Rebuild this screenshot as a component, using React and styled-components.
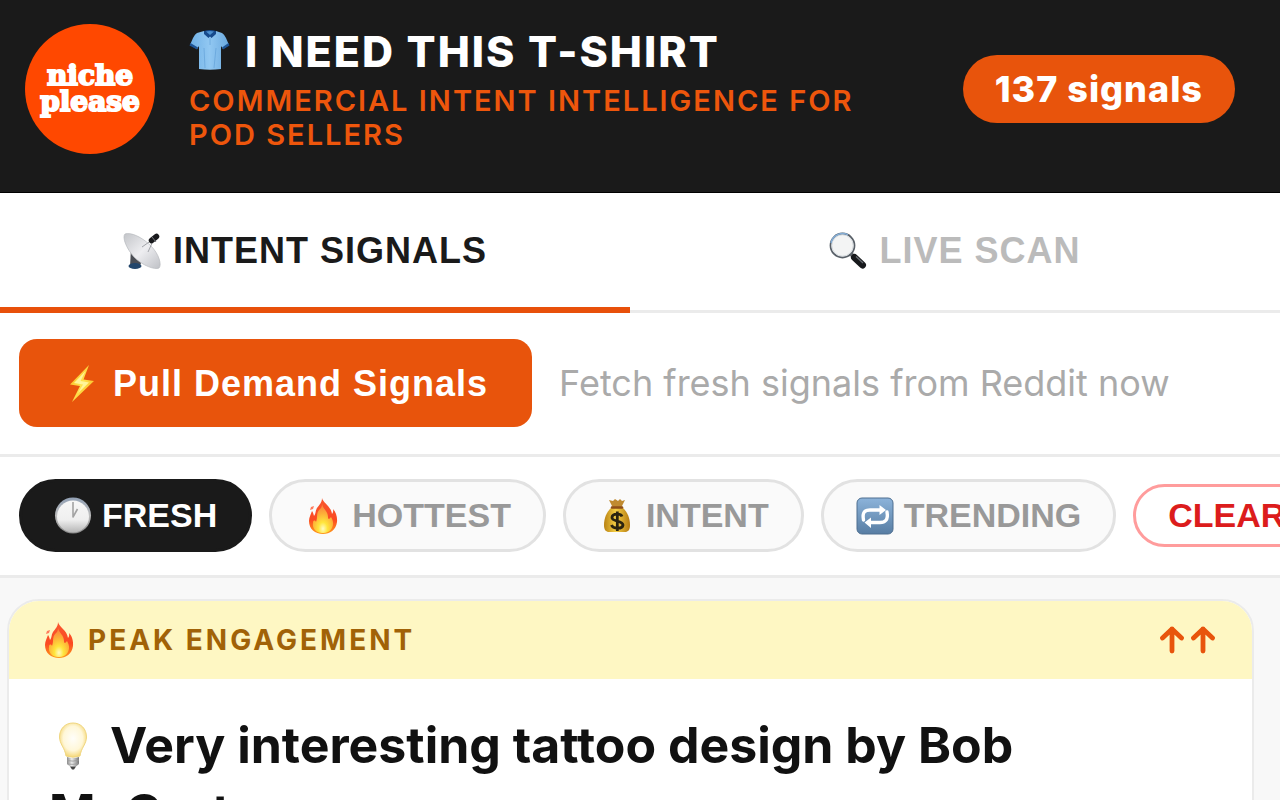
import React from "react";
import styled, { createGlobalStyle } from "styled-components";

const Global = createGlobalStyle`
  *, *::before, *::after { box-sizing: border-box; }
  html, body { margin: 0; min-height: 100vh; background: #f8f8f8; }
  body { overflow-x: hidden; font-family: Inter, "Liberation Sans", sans-serif; color: #111; }
  button { font-family: "Liberation Sans", Arial, sans-serif; cursor: pointer; }
  h1, h2, p { margin: 0; }
`;

const Page = styled.div`
  overflow: hidden;
  height: 100vh;
`;

/* ---------- header ---------- */

const Header = styled.header`
  display: flex;
  align-items: center;
  gap: 34px;
  padding: 24px 45px 38px 25px;
  background: #1a1a1a;
  border-bottom: 1px solid #000;
`;

const Logo = styled.div`
  flex: none;
  width: 130px;
  height: 130px;
  border-radius: 50%;
  background: #ff4800;
  display: flex;
  align-items: center;
  justify-content: center;
  text-align: center;
  color: #fff;
  font: 700 28px/26px "DejaVu Serif", serif;
  -webkit-text-stroke: 2px #fff;
`;

const Brand = styled.div`
  flex: 1;
  min-width: 0;
  padding-right: 16px;
  display: flex;
  flex-direction: column;
  gap: 8px;
`;

const Title = styled.h1`
  display: flex;
  align-items: center;
  gap: 14px;
  color: #fff;
  font-size: 43px;
  font-weight: 800;
  line-height: 50px;
  letter-spacing: 2px;
`;

const Tagline = styled.p`
  color: #ee560c;
  font-size: 29px;
  font-weight: 600;
  line-height: 34px;
  letter-spacing: 2px;
  text-transform: uppercase;
`;

const CountBadge = styled.span`
  flex: none;
  padding: 0 32px;
  border-radius: 34px;
  background: #e8540c;
  color: #fff;
  font-size: 36px;
  font-weight: 800;
  line-height: 68px;
  letter-spacing: 1px;
`;

/* ---------- tabs ---------- */

const Tabs = styled.nav`
  display: flex;
  margin-left: -20px;
  background: #fff;
`;

const Tab = styled.button`
  flex: 1;
  display: flex;
  align-items: center;
  justify-content: center;
  gap: 12px;
  height: 120px;
  padding: 0 0 5px;
  border: 0;
  background: #fff;
  box-shadow: inset 0 ${(p) => (p.$active ? "-6px 0 #e8500a" : "-3px 0 #ebebeb")};
  color: ${(p) => (p.$active ? "#1a1a1a" : "#bbb")};
  font-size: 36px;
  font-weight: 700;
  letter-spacing: 1px;
`;

/* ---------- action row and filters ---------- */

const ActionRow = styled.section`
  display: flex;
  align-items: center;
  gap: 27px;
  padding: 26px 19px 27px;
  background: #fff;
  border-bottom: 3px solid #ebebeb;
`;

const PullButton = styled.button`
  flex: none;
  display: flex;
  align-items: center;
  gap: 12px;
  height: 88px;
  padding: 2px 44px 0;
  border: 0;
  border-radius: 18px;
  background: #e8540c;
  color: #fff;
  font-size: 36px;
  font-weight: 700;
  letter-spacing: 1px;
`;

const Hint = styled.p`
  color: #aaa;
  font-size: 36px;
  line-height: 44px;
  white-space: nowrap;
`;

const Filters = styled.section`
  display: flex;
  align-items: center;
  gap: 17px;
  padding: 22px 19px 23px;
  background: #fff;
  border-bottom: 3px solid #ebebeb;
`;

const Chip = styled.button`
  flex: none;
  display: flex;
  align-items: center;
  gap: 10px;
  height: 73px;
  padding: 0 32px;
  border: 3px solid ${(p) => (p.$active ? "#1a1a1a" : "#e2e2e2")};
  border-radius: 37px;
  background: ${(p) => (p.$active ? "#1a1a1a" : "#fafafa")};
  color: ${(p) => (p.$active ? "#fff" : "#999")};
  font-size: 34px;
  font-weight: 700;
`;

const ClearChip = styled(Chip)`
  height: 63px;
  border-color: #ff9c9c;
  background: #fff;
  color: #dc1c1c;
`;

/* ---------- feed ---------- */

const Feed = styled.main`
  padding: 21px 26px 21px 7px;
`;

const Card = styled.article`
  overflow: hidden;
  border: 2px solid #ebebeb;
  border-radius: 32px;
  background: #fff;
`;

const CardBanner = styled.div`
  display: flex;
  align-items: center;
  justify-content: space-between;
  height: 78px;
  padding: 0 36px 0 31px;
  background: #fef7c3;
`;

const BannerLabel = styled.span`
  display: flex;
  align-items: center;
  gap: 10px;
  color: #a16207;
  font-size: 28px;
  font-weight: 700;
  letter-spacing: 3px;
`;

const CardTitle = styled.h2`
  padding: 33px 40px;
  font-size: 50px;
  font-weight: 700;
  line-height: 67px;
  color: #111;
`;

/* ---------- drawings ---------- */

const Icon = styled.svg`
  flex: none;
  display: block;
  width: ${(p) => p.$size || 38}px;
  height: ${(p) => p.$size || 38}px;
`;

const InlineIcon = styled(Icon)`
  display: inline-block;
  vertical-align: -7px;
  margin-right: 13px;
`;

const Shirt = () => (
  <Icon $size={42} viewBox="0 0 42 42" aria-hidden="true">
    <defs>
      <linearGradient id="shirt" x1="0" x2="1">
        <stop offset="0" stopColor="#6fb0e6" />
        <stop offset=".5" stopColor="#92c8f2" />
        <stop offset="1" stopColor="#6aa9df" />
      </linearGradient>
    </defs>
    <path d="M15 1 L8 3 Q6 4 4 8 L1 15 L8 19 L10 16 L10 39 Q21 40.500 32 39 L32 16 L34 19 L40 15 L37 8 Q35 4 33 3 L27 1 Q21 6 15 1Z" fill="url(#shirt)" />
    <path d="M1.500 13 L9 17.500 L8 19.500 L.5 15.500Z M39.500 13 L33 17.500 L34 19.500 L40.500 15.500Z" fill="#1d5496" />
    <path d="M15 1 Q21 -1 27 1 L27 4 L22.500 8 L21 6.500 L19.500 8 L15 4Z" fill="#174a8c" />
    <path d="M17 1.500 Q21 .5 25 1.500 L21 5Z" fill="#4c8fce" />
    <path d="M15 18 L16 38 M27 18 L25 38 M21 8 V15" stroke="#5d9dd5" strokeWidth="1" fill="none" opacity=".6" />
  </Icon>
);

const Satellite = () => (
  <Icon viewBox="0 0 38 38" aria-hidden="true">
    <defs>
      <linearGradient id="dish" x1="0" y1="0" x2="1" y2="1">
        <stop offset="0" stopColor="#c3c5c9" />
        <stop offset=".5" stopColor="#eeeef1" />
        <stop offset="1" stopColor="#bfc1c6" />
      </linearGradient>
    </defs>
    <path d="M8 17 L7 34 H17 L19 28Z" fill="#4b4e55" />
    <ellipse cx="12" cy="34" rx="6.500" ry="3" fill="#23466b" />
    <path d="M2 2 C8 0 19 5 28 14 C36 22 39 33 36 36 C32 38 20 34 11 25 C3 16 -1 5 2 2Z" fill="url(#dish)" stroke="#b8babf" strokeWidth=".7" />
    <path d="M19 15 L29 8 M25 20 L30 9" stroke="#a2a4a9" strokeWidth="1" />
    <path d="M28.500 8.500 L33.500 4.500" stroke="#191a1d" strokeWidth="5.500" strokeLinecap="round" />
    <path d="M29 5 L33 10" stroke="#77797e" strokeWidth="1" />
  </Icon>
);

const Magnifier = () => (
  <Icon viewBox="0 0 38 38" aria-hidden="true">
    <path d="M22 22 L27 27" stroke="#6d7278" strokeWidth="4" />
    <path d="M25.500 25.500 L33.500 33" stroke="#17191c" strokeWidth="7" strokeLinecap="round" />
    <path d="M27 24.500 L34 31" stroke="#686d73" strokeWidth="1.300" />
    <circle cx="13.500" cy="13.500" r="12" fill="#f3f4f4" stroke="#596068" strokeWidth="1.800" />
    <circle cx="13.500" cy="13.500" r="10.700" fill="none" stroke="#d5dade" strokeWidth="1" />
    <path d="M2 11 A12 12 0 0 1 19 2.800" fill="none" stroke="#83acd4" strokeWidth="1.500" />
  </Icon>
);

const Bolt = () => (
  <Icon viewBox="0 0 38 38" aria-hidden="true">
    <defs>
      <linearGradient id="bolt" x1="0" y1="0" x2="1" y2="1">
        <stop offset="0" stopColor="#f8a90b" />
        <stop offset=".5" stopColor="#ffe34f" />
        <stop offset="1" stopColor="#f5a20a" />
      </linearGradient>
    </defs>
    <path d="M26 0 L7 19.500 L17 21 L9 37 L31 16 L20.500 14.500Z" fill="url(#bolt)" />
    <path d="M22.500 6 L11 18 L20 19.500 L15 28 L26 17.500 L17.500 16Z" fill="#fff59a" />
  </Icon>
);

const Clock = () => (
  <Icon viewBox="0 0 38 38" aria-hidden="true">
    <defs>
      <linearGradient id="rim" x1="0" y1="0" x2="0" y2="1">
        <stop offset="0" stopColor="#92a1b5" />
        <stop offset=".5" stopColor="#bcbcbc" />
        <stop offset="1" stopColor="#888" />
      </linearGradient>
      <linearGradient id="face" x1="0" y1="0" x2="0" y2="1">
        <stop offset="0" stopColor="#f7f7f7" />
        <stop offset=".6" stopColor="#efefef" />
        <stop offset="1" stopColor="#b5b5b5" />
      </linearGradient>
    </defs>
    <circle cx="19" cy="18.500" r="18" fill="url(#rim)" />
    <circle cx="19" cy="19.500" r="16" fill="url(#face)" />
    <path d="M19 5 V20 L23.500 12" fill="none" stroke="#a3a3a3" strokeWidth="1.600" strokeLinejoin="round" />
  </Icon>
);

const Flame = () => (
  <Icon viewBox="0 0 38 38" aria-hidden="true">
    <defs>
      <linearGradient id="flameOuter" x1="0" y1="0" x2="0" y2="1">
        <stop offset="0" stopColor="#f8572f" />
        <stop offset=".6" stopColor="#fb4a22" />
        <stop offset="1" stopColor="#ff9a1b" />
      </linearGradient>
      <radialGradient id="flameInner" cx=".5" cy=".85" r=".75">
        <stop offset="0" stopColor="#fffbc4" />
        <stop offset=".3" stopColor="#ffe53c" />
        <stop offset=".7" stopColor="#fdae38" />
        <stop offset="1" stopColor="#fb8a3c" />
      </radialGradient>
    </defs>
    <path d="M18 1 C19 6 27 9 28 17 C29 16 29.500 14 29 12 C32 15 33.500 20 33 25 C32 33 26 37 19 37 C11 37 5 32 5 24 C5 20 7 17 8 14 C9 15 9.500 17 10 19 C12 17 11 14 13 11 C15 8 18 6 18 1Z" fill="url(#flameOuter)" />
    <path d="M18 7 C19 12 24 14 24 20 C24 22 25 23 27 20 C29 23 30 27 28 31 C26 35 22 36.500 18 36 C12 36 8 31 9 26 C9 23 11 23 12 25 C14 20 12 17 15 13 C17 11 18 10 18 7Z" fill="url(#flameInner)" />
    <path d="M7 10 L10 9 L9 12 L6 13Z" fill="#ff7b5d" />
  </Icon>
);

const MoneyBag = () => (
  <Icon viewBox="0 0 38 38" aria-hidden="true">
    <defs>
      <linearGradient id="bag" x1="0" x2="1">
        <stop offset="0" stopColor="#b98213" />
        <stop offset=".45" stopColor="#f5cf45" />
        <stop offset="1" stopColor="#b57b12" />
      </linearGradient>
    </defs>
    <path d="M11 3 L15 4 L17 2 L20 4 L22 2 L24 4 L27 3 L23 11 H15Z" fill="#c08a30" />
    <path d="M14 10 H24 C29 14 32 21 32 28 C32 33 30 35 27 35 H11 C8 35 6 33 6 28 C6 21 9 14 14 10Z" fill="url(#bag)" />
    <path d="M14 10.500 H24" stroke="#8f4e17" strokeWidth="2.500" strokeLinecap="round" />
    <path d="M24 19.500 C23 16.500 14.500 16 14 20.500 C13.500 25 25 23 25 28 C24.500 32.500 15 32 13.500 28 M19.300 14.500 V34" fill="none" stroke="#2b2410" strokeWidth="2.800" />
  </Icon>
);

const Repeat = () => (
  <Icon viewBox="0 0 38 38" aria-hidden="true">
    <defs>
      <linearGradient id="tile" x1="0" y1="0" x2="0" y2="1">
        <stop offset="0" stopColor="#8cb3da" />
        <stop offset="1" stopColor="#587da3" />
      </linearGradient>
    </defs>
    <rect x="1" y="1" width="36" height="36" rx="5" fill="url(#tile)" stroke="#4f6f90" />
    <path d="M7.500 23 C6 15 9 13 14 13 H25" fill="none" stroke="#fff" strokeWidth="3.400" strokeLinecap="round" />
    <path d="M31 15 C32.500 23 29 25.500 24 25.500 H13" fill="none" stroke="#fff" strokeWidth="3.400" strokeLinecap="round" />
    <path d="M23.500 8 L30 13 L23.500 18Z M15 20.500 L8.500 25.500 L15 31Z" fill="#fff" />
  </Icon>
);

const Bulb = () => (
  <InlineIcon $size={48} viewBox="0 0 48 48" aria-hidden="true">
    <defs>
      <radialGradient id="glass" cx=".5" cy=".45" r=".55">
        <stop offset="0" stopColor="#fffefa" />
        <stop offset=".65" stopColor="#fff7d8" />
        <stop offset="1" stopColor="#f5d777" />
      </radialGradient>
      <linearGradient id="screw" x1="0" x2="1">
        <stop offset="0" stopColor="#8b8b8b" />
        <stop offset=".4" stopColor="#ececec" />
        <stop offset="1" stopColor="#777" />
      </linearGradient>
    </defs>
    <path d="M24 1 C32 1 37.500 7 37.500 15 C37.500 22 32 26 31 34 Q24 36.500 17 34 C16 26 10.500 22 10.500 15 C10.500 7 16 1 24 1Z" fill="url(#glass)" stroke="#f0d67f" strokeWidth="1" />
    <path d="M18 35 Q24 37 30 35 V42 L27 44.500 H21 L18 42Z" fill="url(#screw)" />
    <path d="M18 38.500 Q24 40 30 38 M18.500 42 Q24 43 29.500 41.500" stroke="#9a9a9a" strokeWidth=".8" fill="none" />
    <path d="M21 44.500 H27 L25 47.500 H23Z" fill="#444" />
  </InlineIcon>
);

const Arrows = styled.svg`
  display: block;
  width: 56px;
  height: 28px;
`;

const arrow = "M12 25 V3 M2.500 12 L12 3 L21.500 12";

const filters = [
  { label: "FRESH", icon: Clock, active: true },
  { label: "HOTTEST", icon: Flame },
  { label: "INTENT", icon: MoneyBag },
  { label: "TRENDING", icon: Repeat },
];

export default function App() {
  return (
    <Page>
      <Global />
      <Header>
        <Logo>niche<br />please</Logo>
        <Brand>
          <Title><Shirt />I NEED THIS T-SHIRT</Title>
          <Tagline>Commercial intent intelligence for POD sellers</Tagline>
        </Brand>
        <CountBadge>137 signals</CountBadge>
      </Header>
      <Tabs>
        <Tab type="button" $active aria-current="page"><Satellite />INTENT SIGNALS</Tab>
        <Tab type="button"><Magnifier />LIVE SCAN</Tab>
      </Tabs>
      <ActionRow>
        <PullButton type="button"><Bolt />Pull Demand Signals</PullButton>
        <Hint>Fetch fresh signals from Reddit now</Hint>
      </ActionRow>
      <Filters>
        {filters.map(({ label, icon: Glyph, active }) => (
          <Chip key={label} type="button" $active={active} aria-pressed={!!active}>
            <Glyph />{label}
          </Chip>
        ))}
        <ClearChip type="button">CLEAR</ClearChip>
      </Filters>
      <Feed>
        <Card>
          <CardBanner>
            <BannerLabel><Flame />PEAK ENGAGEMENT</BannerLabel>
            <Arrows viewBox="0 0 56 28" role="img" aria-label="Rising fast">
              <path d={arrow} fill="none" stroke="#e8540c" strokeWidth="4.800" strokeLinecap="round" strokeLinejoin="round" />
              <path d={arrow} transform="translate(31 0)" fill="none" stroke="#e8540c" strokeWidth="4.800" strokeLinecap="round" strokeLinejoin="round" />
            </Arrows>
          </CardBanner>
          <CardTitle><Bulb />Very interesting tattoo design by Bob McCarty</CardTitle>
        </Card>
      </Feed>
    </Page>
  );
}
